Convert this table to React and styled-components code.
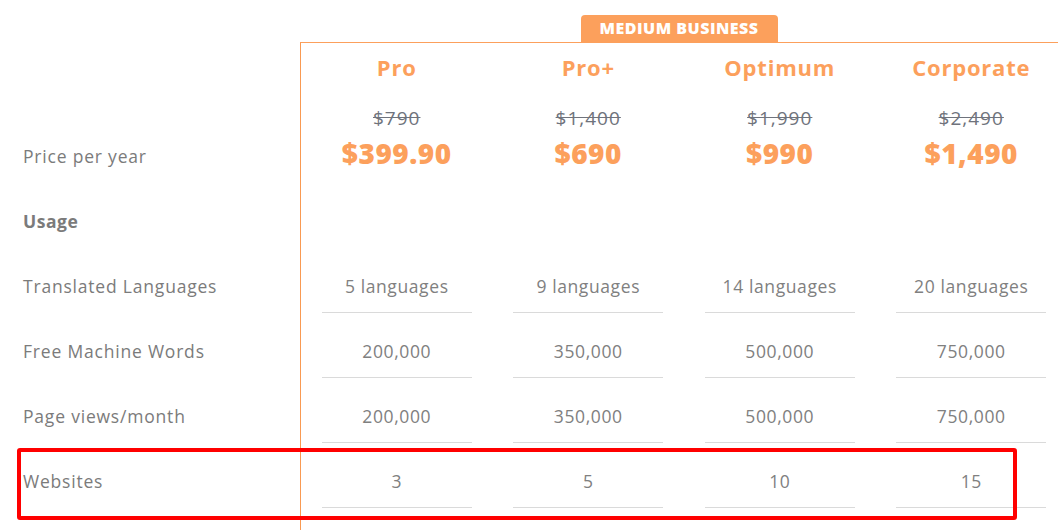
import React from 'react';
import styled, {createGlobalStyle} from 'styled-components';

const ORANGE = '#fca05c';

const plans = [
    {name: 'Pro', oldPrice: '$790', price: '$399.90', values: ['5 languages', '200,000', '200,000', '3']},
    {name: 'Pro+', oldPrice: '$1,400', price: '$690', values: ['9 languages', '350,000', '350,000', '5']},
    {name: 'Optimum', oldPrice: '$1,990', price: '$990', values: ['14 languages', '500,000', '500,000', '10']},
    {name: 'Corporate', oldPrice: '$2,490', price: '$1,490', values: ['20 languages', '750,000', '750,000', '15']},
]

const features = ['Translated Languages', 'Free Machine Words', 'Page views/month', 'Websites']

const GlobalStyle = createGlobalStyle`
  html, body {
    margin: 0;
    padding: 0;
    background: #fff;
    overflow: hidden;
  }

  body {
    font-family: "Open Sans", "Noto Sans", sans-serif;
  }
`

const App = () => {
    return (
        <>
            <GlobalStyle/>
            <Page>
                <LabelColumn>
                    <NameSpacer/>
                    <PriceLabel>Price per year</PriceLabel>
                    <SectionLabel>Usage</SectionLabel>
                    {features.map(feature => (
                        <FeatureLabel key={feature}>{feature}</FeatureLabel>
                    ))}
                </LabelColumn>
                <PanelWrap>
                    <Badge>Medium Business</Badge>
                    <Panel>
                        {plans.map(plan => (
                            <PlanColumn key={plan.name}>
                                <PlanName>{plan.name}</PlanName>
                                <Prices>
                                    <OldPrice>{plan.oldPrice}</OldPrice>
                                    <Price>{plan.price}</Price>
                                </Prices>
                                <SectionSpacer/>
                                {plan.values.map((value, index) => (
                                    <ValueCell key={index}>{value}</ValueCell>
                                ))}
                            </PlanColumn>
                        ))}
                    </Panel>
                </PanelWrap>
                <Highlight/>
            </Page>
        </>
    );
};

const Page = styled.div`
  position: relative;
  display: flex;
  width: 1058px;
  height: 530px;
`

const LabelColumn = styled.div`
  width: 300px;
  flex-shrink: 0;
  padding-top: 43px;
  display: flex;
  flex-direction: column;
  color: #7b7b7b;
  font-size: 17.5px;
  letter-spacing: 0.8px;
  line-height: 24px;

  > div {
    padding-left: 23px;
  }
`

const NameSpacer = styled.div`
  height: 50px;
`

const PriceLabel = styled.div`
  height: 97px;
  box-sizing: border-box;
  padding-top: 51px;
`

const SectionLabel = styled.div`
  height: 58px;
  box-sizing: border-box;
  padding-top: 19px;
  font-weight: 700;
  letter-spacing: 0.5px;
`

const FeatureLabel = styled.div`
  height: 65px;
  box-sizing: border-box;
  padding-top: 26px;
`

const PanelWrap = styled.div`
  flex: 1;
  min-width: 0;
  display: flex;
  flex-direction: column;
  padding-top: 15px;
`

const Badge = styled.div`
  align-self: center;
  width: 197px;
  height: 27px;
  box-sizing: border-box;
  background: ${ORANGE};
  border-radius: 4px 4px 0 0;
  color: #fff;
  font-weight: 800;
  font-size: 16px;
  letter-spacing: 0.5px;
  line-height: 27px;
  text-align: center;
  text-transform: uppercase;
`

const Panel = styled.div`
  flex: 1;
  display: grid;
  grid-template-columns: repeat(4, 191.5px);
  border-top: 1px solid ${ORANGE};
  border-left: 1px solid #f99a52;
`

const PlanColumn = styled.div`
  display: flex;
  flex-direction: column;
  align-items: center;
  text-align: center;
`

const PlanName = styled.div`
  height: 50px;
  line-height: 48px;
  color: ${ORANGE};
  font-size: 22px;
  letter-spacing: 0.8px;
  font-weight: 700;
`

const Prices = styled.div`
  height: 97px;
  box-sizing: border-box;
  padding-top: 13px;
  display: flex;
  flex-direction: column;
  gap: 5px;
`

const OldPrice = styled.div`
  color: #6f737c;
  font-size: 19px;
  letter-spacing: 1px;
  line-height: 24px;
  text-decoration: line-through;
`

const Price = styled.div`
  color: ${ORANGE};
  font-size: 28px;
  letter-spacing: 0.5px;
  font-weight: 800;
  line-height: 36px;
`

const SectionSpacer = styled.div`
  height: 58px;
`

const ValueCell = styled.div`
  width: 150px;
  height: 65px;
  box-sizing: border-box;
  padding-top: 26px;
  border-bottom: 1px solid #dadada;
  color: #808080;
  font-size: 17.5px;
  letter-spacing: 0.6px;
  line-height: 24px;
`

const Highlight = styled.div`
  position: absolute;
  left: 17px;
  top: 448px;
  width: 1000px;
  height: 72px;
  box-sizing: border-box;
  border: 4px solid #ff0000;
  border-radius: 3px;
  pointer-events: none;
`

export default App;
